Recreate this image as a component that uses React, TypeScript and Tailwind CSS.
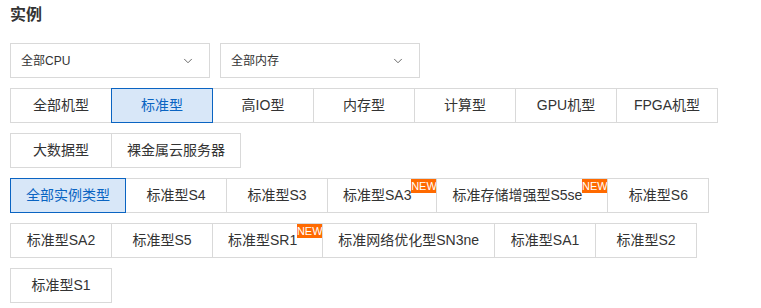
import { ChevronDown } from 'lucide-react';

const machineTypes = ['全部机型', '标准型', '高IO型', '内存型', '计算型', 'GPU机型', 'FPGA机型', '大数据型', '裸金属云服务器'];

const instanceTypes: { name: string; isNew?: boolean }[] = [
  { name: '全部实例类型' },
  { name: '标准型S4' },
  { name: '标准型S3' },
  { name: '标准型SA3', isNew: true },
  { name: '标准存储增强型S5se', isNew: true },
  { name: '标准型S6' },
  { name: '标准型SA2' },
  { name: '标准型S5' },
  { name: '标准型SR1', isNew: true },
  { name: '标准网络优化型SN3ne' },
  { name: '标准型SA1' },
  { name: '标准型S2' },
  { name: '标准型S1' },
];

function Select({ label }: { label: string }) {
  return (
    <div className="flex h-[35px] w-[200px] items-center justify-between border border-[#d9d9d9] bg-white pl-[10px] pr-[14px] text-[12px] text-[#333]">
      <span>{label}</span>
      <ChevronDown size={14} strokeWidth={1.5} className="text-[#555]" />
    </div>
  );
}

function Option({ name, active, isNew }: { name: string; active?: boolean; isNew?: boolean }) {
  return (
    <div
      className={
        'relative -ml-px flex h-[35px] min-w-[102px] items-center justify-center border pl-[15px] text-[14px] ' +
        (isNew ? 'pr-[25px] ' : 'pr-[15px] ') +
        (active ? 'z-10 border-[#0a64c2] bg-[#d8e7f8] text-[#0a64c2]' : 'border-[#d9d9d9] bg-white text-[#333]')
      }
    >
      {name}
      {isNew && (
        <span className="absolute right-0 top-0 flex h-[14px] w-[25px] items-center justify-center bg-[#ff6a00] text-[11px] leading-none text-white">
          NEW
        </span>
      )}
    </div>
  );
}

export default function App() {
  return (
    <div
      className="min-h-screen bg-white pl-[10px] pt-[4px]"
      style={{ fontFamily: '"Liberation Sans", "Noto Sans CJK SC", sans-serif' }}
    >
      <h2 className="text-[16px] font-bold leading-[22px] text-[#333]">实例</h2>
      <div className="mt-[17px] flex gap-[10px]">
        <Select label="全部CPU" />
        <Select label="全部内存" />
      </div>
      <div className="mt-[10px] flex flex-wrap gap-y-[10px] pl-px">
        {machineTypes.map((t) => (
          <Option key={t} name={t} active={t === '标准型'} />
        ))}
      </div>
      <div className="mt-[10px] flex flex-wrap gap-y-[10px] pl-px">
        {instanceTypes.map((t, i) => (
          <Option key={t.name} name={t.name} isNew={t.isNew} active={i === 0} />
        ))}
      </div>
    </div>
  );
}
